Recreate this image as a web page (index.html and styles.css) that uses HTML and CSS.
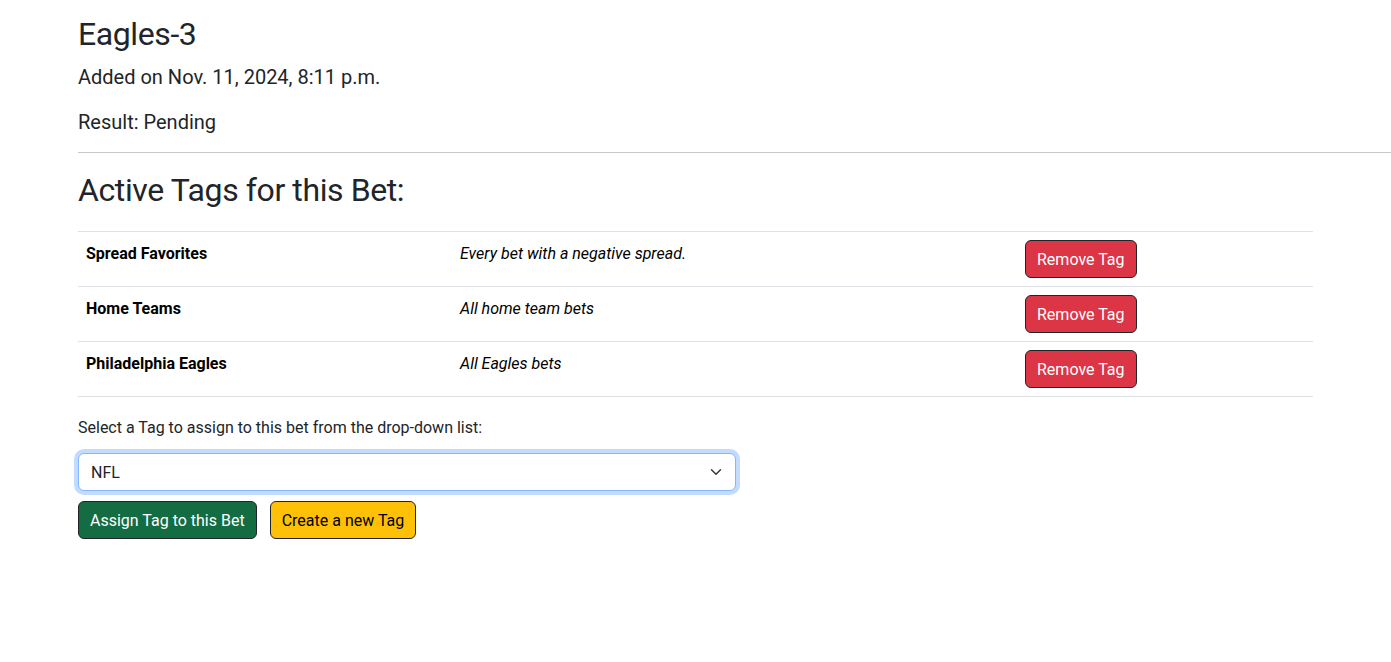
FILE: index.html
```html
<!DOCTYPE html>
<html lang="en">
<head>
<meta charset="utf-8">
<title>Eagles-3</title>
<link rel="stylesheet" href="styles.css">
</head>
<body>
<main class="page">
  <h2 class="title">Eagles-3</h2>
  <p class="meta added">Added on Nov. 11, 2024, 8:11 p.m.</p>
  <p class="meta result">Result: Pending</p>
  <hr class="divider">
  <h2 class="section-title">Active Tags for this Bet:</h2>
  <table class="tags">
    <colgroup>
      <col class="col-name">
      <col class="col-desc">
      <col class="col-action">
    </colgroup>
    <tbody>
      <tr>
        <td class="tag-name">Spread Favorites</td>
        <td class="tag-desc">Every bet with a negative spread.</td>
        <td class="tag-action"><button class="btn btn-danger" type="button">Remove Tag</button></td>
      </tr>
      <tr>
        <td class="tag-name">Home Teams</td>
        <td class="tag-desc">All home team bets</td>
        <td class="tag-action"><button class="btn btn-danger" type="button">Remove Tag</button></td>
      </tr>
      <tr>
        <td class="tag-name">Philadelphia Eagles</td>
        <td class="tag-desc">All Eagles bets</td>
        <td class="tag-action"><button class="btn btn-danger" type="button">Remove Tag</button></td>
      </tr>
    </tbody>
  </table>
  <form class="assign-form">
    <label class="form-label" for="tag">Select a Tag to assign to this bet from the drop-down list:</label>
    <div class="select-wrap">
      <select id="tag" class="form-select">
        <option>NFL</option>
      </select>
      <svg class="chevron" width="16" height="12" viewBox="0 0 16 16" aria-hidden="true"><path fill="none" stroke="#343a40" stroke-linecap="round" stroke-linejoin="round" stroke-width="2" d="m2 5 6 6 6-6"/></svg>
    </div>
    <div class="actions">
      <button class="btn btn-success" type="button">Assign Tag to this Bet</button>
      <button class="btn btn-warning" type="button">Create a new Tag</button>
    </div>
  </form>
</main>
</body>
</html>
```
FILE: styles.css
```css
* { box-sizing: border-box; }

html, body {
  margin: 0;
  background: #fff;
}

body {
  font-family: Roboto, "Liberation Sans", Arial, sans-serif;
  font-size: 16px;
  line-height: 1.5;
  color: #212529;
}

.page {
  padding: 15px 0 0 78px;
}

.title {
  margin: 0;
  font-size: 32px;
  font-weight: 400;
  line-height: 38.4px;
  letter-spacing: -0.4px;
}

.meta {
  font-size: 20px;
  line-height: 24px;
  margin: 0;
}

.added {
  margin-top: 12px;
}

.result {
  margin-top: 21px;
}

.divider {
  margin: 18px 0 0;
  border: 0;
  border-top: 1px solid #c8c9ca;
  height: 0;
}

.section-title {
  margin: 18px 0 0;
  font-size: 32px;
  font-weight: 400;
  line-height: 38.4px;
  letter-spacing: -0.4px;
}

.tags {
  width: calc(100% - 78px);
  margin: 21px 0 0;
  border-collapse: collapse;
  border-top: 1px solid #dee2e6;
  color: #000;
}

.col-name { width: 374px; }
.col-desc { width: 565px; }
.col-action { width: 296px; }

.tags td {
  padding: 10px 8px 8px;
  border-bottom: 1px solid #dee2e6;
  vertical-align: top;
  line-height: 24px;
}

.tags td.tag-action {
  padding-top: 8px;
}

.tag-name { font-weight: 700; }
.tag-desc { font-style: italic; }

.btn {
  display: inline-block;
  font-family: inherit;
  font-size: 16px;
  line-height: 24px;
  padding: 7px 11px 5px;
  border: 1px solid #212529;
  border-radius: 6px;
  cursor: pointer;
  vertical-align: top;
}

.btn-danger {
  background: #dc3545;
  color: #fff;
}

.btn-success {
  background: #146c43;
  color: #fff;
}

.btn-warning {
  background: #ffc107;
  color: #000;
}

.assign-form {
  margin-top: 19px;
}

.form-label {
  display: block;
  line-height: 24px;
  margin-bottom: 13px;
}

.select-wrap {
  position: relative;
  width: 658px;
}

.form-select {
  display: block;
  width: 100%;
  height: 38px;
  padding: 7px 36px 5px 12px;
  font-family: inherit;
  font-size: 16px;
  line-height: 24px;
  color: #212529;
  background: #fff;
  border: 1px solid #86b7fe;
  border-radius: 6px;
  box-shadow: 0 0 0 4px rgba(13, 110, 253, 0.25);
  outline: 0;
  appearance: none;
  -webkit-appearance: none;
}

.chevron {
  position: absolute;
  right: 12px;
  top: 13px;
  pointer-events: none;
}

.actions {
  display: flex;
  gap: 13px;
  margin-top: 10px;
}
```
